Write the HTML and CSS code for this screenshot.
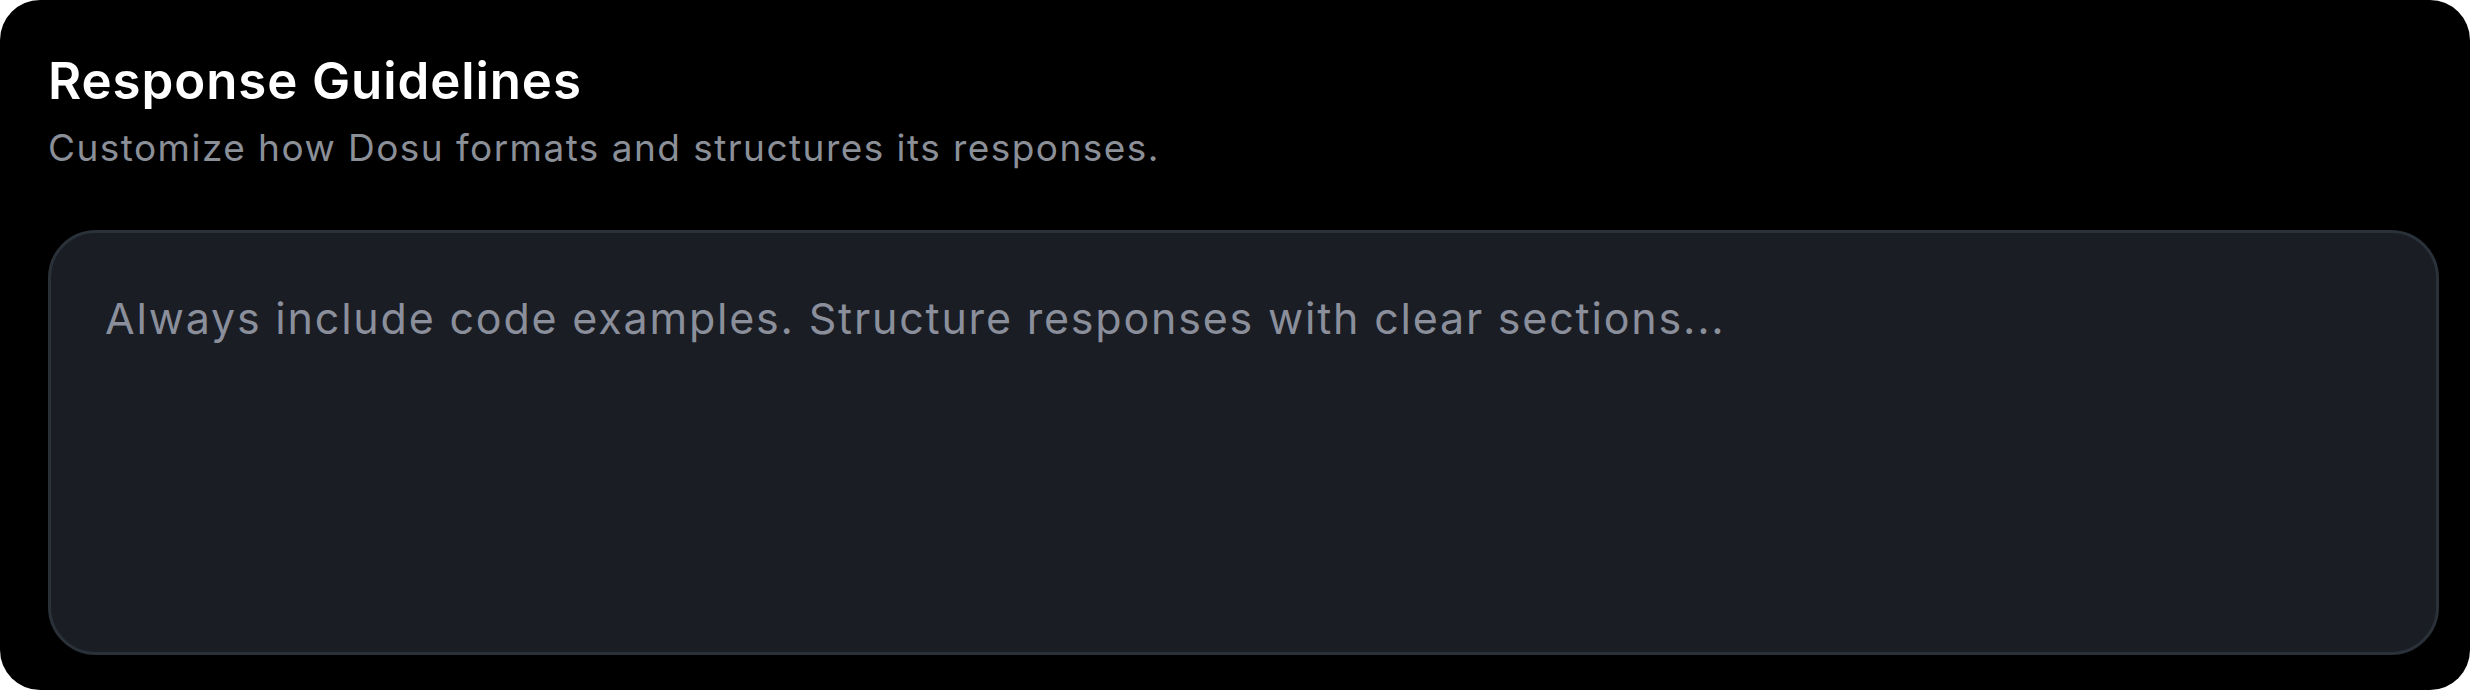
FILE: index.html
```html
<!DOCTYPE html>
<html lang="en">
<head>
    <meta charset="UTF-8">
    <meta name="viewport" content="width=device-width, initial-scale=1.0">
    <title>Response Guidelines</title>
    <link rel="stylesheet" href="styles.css">
</head>
<body>
    <div class="panel">
        <div class="panel-header">
            <h2>Response Guidelines</h2>
            <p>Customize how Dosu formats and structures its responses.</p>
        </div>
        <textarea class="guidelines-input" placeholder="Always include code examples. Structure responses with clear sections..."></textarea>
    </div>
</body>
</html>
```

FILE: styles.css
```css
* {
    margin: 0;
    padding: 0;
    box-sizing: border-box;
}

body {
    font-family: Inter, 'Noto Sans', sans-serif;
    background: #ffffff;
    height: 100vh;
}

.panel {
    height: 100%;
    background: #000000;
    border-radius: 40px;
    padding: 50px 31px 35px 48px;
    display: flex;
    flex-direction: column;
}

.panel-header h2 {
    color: #ffffff;
    font-size: 51px;
    font-weight: 600;
    line-height: 1.2;
    letter-spacing: 0.9px;
}

.panel-header p {
    color: #8b8f98;
    font-size: 37px;
    line-height: 1.4;
    margin-top: 11px;
    letter-spacing: 1.45px;
}

.guidelines-input {
    flex: 1;
    margin-top: 56px;
    width: 100%;
    resize: none;
    background: #1a1d24;
    border: 3px solid #2a3139;
    border-radius: 48px;
    padding: 53px 54px;
    color: #e5e7eb;
    font-family: inherit;
    font-size: 43px;
    line-height: 1.5;
    letter-spacing: 1.8px;
    outline: none;
}

.guidelines-input::placeholder {
    color: #8a8f9b;
}
```
